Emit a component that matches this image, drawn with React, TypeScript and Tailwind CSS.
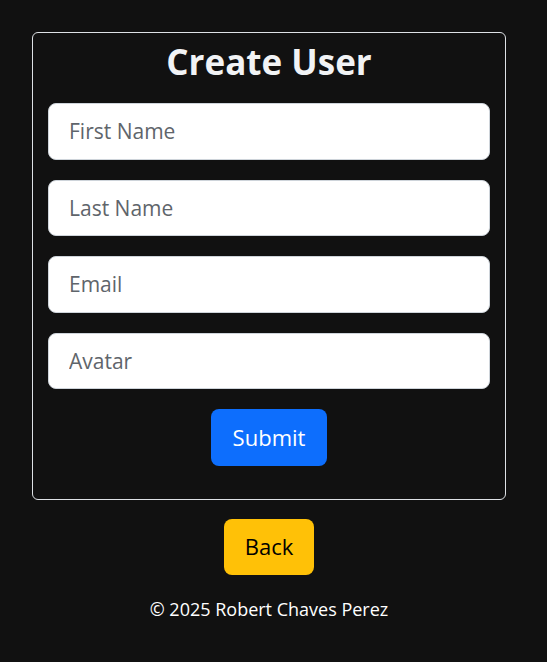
import { useState } from 'react';

const FIELDS = ['First Name', 'Last Name', 'Email', 'Avatar'];

export default function App() {
  const [values, setValues] = useState<Record<string, string>>({});

  return (
    <div className="min-h-screen bg-[#111111] pt-8 pr-[9px] flex flex-col items-center" style={{ fontFamily: '"Open Sans", "Noto Sans", sans-serif' }}>
      {/* Form card */}
      <div className="w-[474px] border border-[#dee2e6] rounded-[6px] px-[15px] pb-[33px]">
        <h1 className="text-center font-bold text-[35px] leading-[44px] text-[#f1f3f5] mt-[7px] mb-[19px]">Create User</h1>
        <form className="flex flex-col gap-5" onSubmit={e => e.preventDefault()}>
          {FIELDS.map(f => (
            <input
              key={f}
              type="text"
              placeholder={f}
              value={values[f] ?? ''}
              onChange={e => setValues({ ...values, [f]: e.target.value })}
              className="h-[56.5px] w-full bg-white border border-[#ced4da] rounded-[8px] px-5 text-[21px] text-[#212529] placeholder:text-[#5f656b] outline-none"
            />
          ))}
          <div className="flex justify-center">
            <button type="submit" className="h-[56.5px] w-[116px] bg-[#0d6efd] text-white text-[22px] rounded-[8px]">Submit</button>
          </div>
        </form>
      </div>

      <button className="mt-[19px] h-[56.5px] w-[90px] bg-[#ffc107] text-black text-[22px] rounded-[8px]">Back</button>

      <p className="mt-[21px] text-white text-[18px]">© 2025 Robert Chaves Perez</p>
    </div>
  );
}
